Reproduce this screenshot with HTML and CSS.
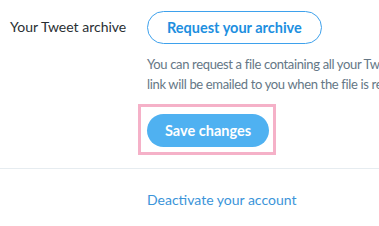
FILE: index.html
```html
<!DOCTYPE html>
<html lang="en">
<head>
    <meta charset="UTF-8">
    <title>Account settings</title>
    <link rel="stylesheet" href="styles.css">
</head>
<body>
    <div class="settings">
        <div class="row">
            <div class="label">Your Tweet archive</div>
            <div class="content">
                <a href="#" class="btn-outline">Request your archive</a>
                <p class="help">You can request a file containing all your Tweets, starting with your first. A<br>link will be emailed to you when the file is ready to be downloaded.</p>
                <div class="highlight">
                    <button class="btn-primary">Save changes</button>
                </div>
            </div>
        </div>
        <hr class="divider">
        <div class="row row-bottom">
            <div class="label"></div>
            <div class="content">
                <a href="#" class="link">Deactivate your account</a>
            </div>
        </div>
    </div>
</body>
</html>
```

FILE: styles.css
```css
        html, body {
            margin: 0;
            padding: 0;
            background-color: #fff;
            overflow: hidden;
        }
        body {
            font-family: 'Segoe UI', Lato, 'Noto Sans', sans-serif;
            color: #292f33;
            font-size: 14px;
        }
        .settings {
            width: 600px;
        }
        .row {
            display: flex;
            padding-top: 11px;
        }
        .label {
            width: 147px;
            flex: none;
            box-sizing: border-box;
            padding-left: 10px;
            padding-top: 7px;
            font-size: 14px;
            line-height: 18px;
        }
        .content {
            flex: 1;
        }
        .btn-outline {
            display: inline-flex;
            align-items: center;
            box-sizing: border-box;
            height: 33px;
            padding: 0 19px;
            border: 1px solid #3ea1ec;
            border-radius: 100px;
            color: #1d8fe0;
            font-weight: bold;
            font-size: 14.5px;
            text-decoration: none;
        }
        .help {
            margin: 10px 0 0;
            font-size: 13px;
            letter-spacing: -0.35px;
            line-height: 20px;
            color: #657786;
            white-space: nowrap;
        }
        .highlight {
            display: inline-block;
            margin: 10px 0 0 -9px;
            padding: 7px 4px 5px 6px;
            border: 3px solid #f5b1c8;
        }
        .btn-primary {
            display: block;
            height: 33px;
            padding: 0 18px;
            border: none;
            border-radius: 100px;
            background-color: #4fb1f1;
            color: #fff;
            font-family: inherit;
            font-weight: bold;
            font-size: 14.5px;
            cursor: pointer;
        }
        .divider {
            margin: 13px 0 0;
            border: none;
            border-top: 1px solid #e6ecf0;
        }
        .row-bottom {
            padding-top: 22px;
        }
        .link {
            color: #3b94d9;
            text-decoration: none;
            font-size: 14px;
            line-height: 18px;
        }
```
